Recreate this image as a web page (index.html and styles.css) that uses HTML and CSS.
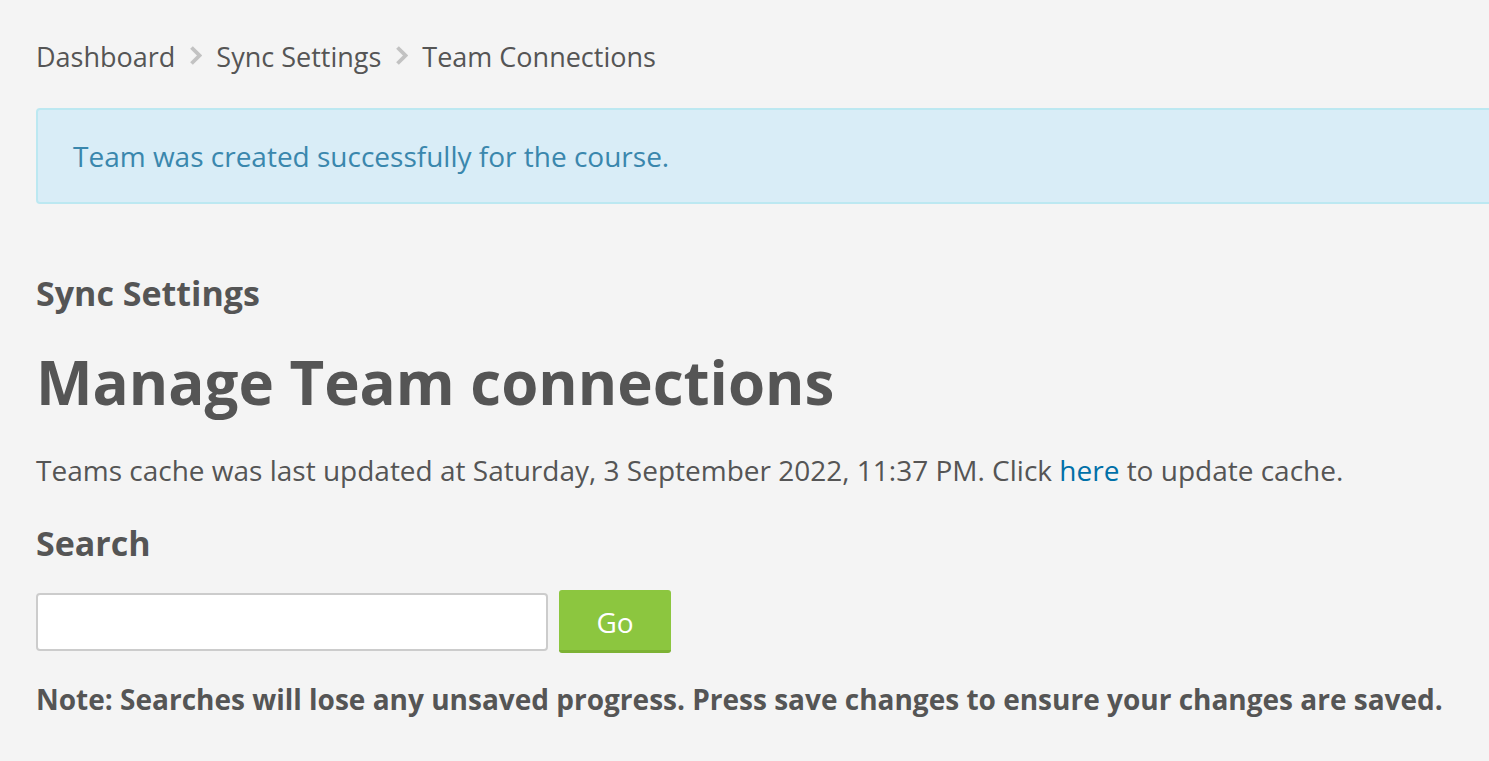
FILE: index.html
```html
<!DOCTYPE html>
<html>
<head>
<meta charset="utf-8">
<link rel="stylesheet" href="styles.css">
</head>
<body>
<div class="page">
  <nav class="breadcrumb">
    <span class="crumb">Dashboard</span>
    <svg class="sep" width="13" height="19" viewBox="0 0 13 19"><path d="M2.5 1.5 L10.5 9.5 L2.5 17.5" fill="none" stroke="#c2c2c2" stroke-width="3.8"/></svg>
    <span class="crumb">Sync Settings</span>
    <svg class="sep" width="13" height="19" viewBox="0 0 13 19"><path d="M2.5 1.5 L10.5 9.5 L2.5 17.5" fill="none" stroke="#c2c2c2" stroke-width="3.8"/></svg>
    <span class="crumb">Team Connections</span>
  </nav>
  <div class="alert">Team was created successfully for the course.</div>
  <h3 class="subhead">Sync Settings</h3>
  <h2 class="title">Manage Team connections</h2>
  <p class="info">Teams cache was last updated at Saturday, 3 September 2022, 11:37 PM. Click <a href="#">here</a> to update cache.</p>
  <h4 class="search-label">Search</h4>
  <form class="search">
    <input type="text" class="search-input">
    <button type="button" class="go">Go</button>
  </form>
  <p class="note">Note: Searches will lose any unsaved progress. Press save changes to ensure your changes are saved.</p>
</div>
</body>
</html>
```
FILE: styles.css
```css
html, body {
  margin: 0;
  padding: 0;
  background: #f4f4f4;
  overflow: hidden;
}
body {
  font-family: "Open Sans", "Liberation Sans", sans-serif;
  color: #555;
  font-size: 28px;
}
.page {
  padding: 38px 0 0 36px;
}
.breadcrumb {
  display: flex;
  align-items: center;
  gap: 14px;
  font-size: 27px;
  line-height: 38px;
  height: 38px;
}
.sep {
  display: block;
  margin-top: -3px;
}
.alert {
  margin-top: 32px;
  margin-right: -20px;
  background: #d9edf7;
  border: 2px solid #bce8f1;
  border-radius: 4px;
  color: #3a87ad;
  font-size: 28px;
  line-height: 40px;
  padding: 26px 35px;
}
.subhead {
  margin: 67px 0 0;
  font-size: 34px;
  font-weight: 700;
  line-height: 44px;
}
.title {
  margin: 29px 0 0;
  font-size: 60px;
  font-weight: 700;
  line-height: 76px;
}
.info {
  margin: 30px 0 0;
  line-height: 40px;
}
.info a {
  color: #0070a8;
  text-decoration: none;
}
.search-label {
  margin: 31px 0 0;
  font-size: 34px;
  font-weight: 700;
  line-height: 44px;
}
.search {
  display: flex;
  align-items: center;
  gap: 11px;
  margin-top: 25px;
}
.search-input {
  width: 512px;
  height: 58px;
  box-sizing: border-box;
  border: 2px solid #ccc;
  border-radius: 4px;
  background: #fff;
  margin: 0;
}
.go {
  width: 112px;
  height: 63px;
  box-sizing: border-box;
  background: #8cc63f;
  border: none;
  border-bottom: 3px solid #7db234;
  border-radius: 3px;
  color: #fff;
  font-family: "Open Sans", sans-serif;
  font-size: 28px;
  padding: 3px 0 0;
}
.note {
  margin: 26px 0 0;
  font-weight: 700;
  line-height: 40px;
}
```
